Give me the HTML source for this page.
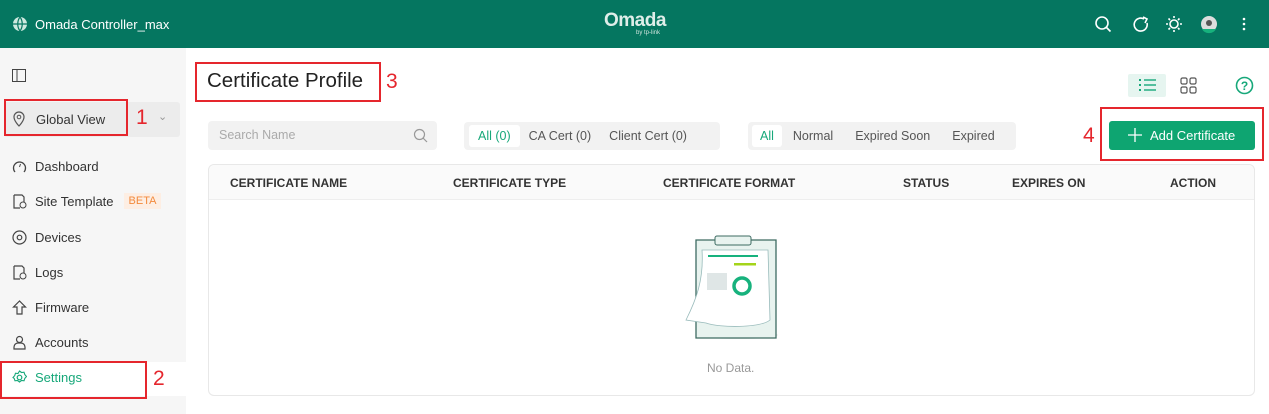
<!DOCTYPE html>
<html><head><style>
*{box-sizing:border-box;margin:0;padding:0}
body{width:1269px;height:414px;overflow:hidden;font-family:"Liberation Sans",sans-serif;background:#fff;position:relative;color:#333}
.abs{position:absolute}
.hdr{left:0;top:0;width:1269px;height:48px;background:#057660}
.side{left:0;top:48px;width:186px;height:366px;background:#f6f6f6}
.nav{position:absolute;left:12px;font-size:13px;color:#333;display:flex;align-items:center;gap:8px}
.red{border:2px solid #e5262d;position:absolute}
.rn{position:absolute;color:#e5262d;font-size:21px}
.seg{position:absolute;background:#f2f2f2;border-radius:4px;height:28px;top:122px;display:flex;align-items:center;padding:0 4px;font-size:12.5px;color:#555}
.seg span{padding:0 8px;height:22px;line-height:22px;border-radius:3px}
.seg .on{background:#fff;color:#17a87a}
.th{position:absolute;top:176px;font-size:12px;font-weight:bold;color:#333}
</style></head><body>
<div class="abs hdr"></div>
<svg class="abs" style="left:12px;top:16px" width="16" height="16" viewBox="0 0 16 16"><circle cx="8" cy="8" r="7" fill="#cde8df"/><path d="M1 8h14M8 1c-3 4-3 10 0 14M8 1c3 4 3 10 0 14" stroke="#057660" stroke-width="1.2" fill="none"/></svg>
<div class="abs" style="left:35px;top:17px;color:#fff;font-size:13px">Omada Controller_max</div>
<div class="abs" style="left:604px;top:10px;color:#dfeee9;font-size:19px;font-weight:bold;letter-spacing:-0.5px">Omada</div>
<div class="abs" style="left:636px;top:30px;color:#cfe5de;font-size:6px">by tp-link</div>
<svg class="abs" style="left:1094px;top:15px" width="160" height="20" viewBox="0 0 160 20"><g fill="none" stroke="#fff" stroke-width="1.6"><circle cx="8" cy="8" r="6"/><path d="M12.5 12.5l4 4"/><path d="M50 4a6.5 6.5 0 1 0 3 4"/><path d="M49 2l4 2-2 4"/><circle cx="80" cy="9" r="4"/><path d="M80 1v2M80 15v2M72 9h2M86 9h2M74.5 3.5l1.5 1.5M84 13l1.5 1.5M74.5 14.5L76 13M84 5l1.5-1.5"/></g><circle cx="115" cy="9" r="8" fill="#ddd"/><path d="M108 14a8 8 0 0 0 14 0z" fill="#17b27d"/><circle cx="115" cy="8" r="3" fill="#555"/><g fill="#fff"><circle cx="150" cy="4" r="1.3"/><circle cx="150" cy="9" r="1.3"/><circle cx="150" cy="14" r="1.3"/></g></svg>

<div class="abs side"></div>
<svg class="abs" style="left:12px;top:69px" width="14" height="13"><rect x="0.5" y="0.5" width="13" height="12" fill="none" stroke="#444"/><path d="M5 1v11" stroke="#444"/></svg>
<div class="abs" style="left:4px;top:102px;width:176px;height:35px;background:#ececec;border-radius:3px"></div>
<div class="red" style="left:4px;top:99px;width:124px;height:37px"></div>
<div class="rn" style="left:136px;top:106px">1</div>
<div class="abs" style="left:158px;top:110px;color:#999;font-size:11px">&#8964;</div>
<div class="nav" style="top:111px"><svg width="14" height="16"><path d="M7 15s5-5 5-9a5 5 0 0 0-10 0c0 4 5 9 5 9z" fill="none" stroke="#555" stroke-width="1.2"/><circle cx="7" cy="6" r="1.8" fill="none" stroke="#555"/></svg><span style="margin-left:2px">Global View</span></div>
<div class="nav" style="top:159px"><svg width="15" height="15"><path d="M3 13a6 6 0 1 1 9 0" fill="none" stroke="#444" stroke-width="1.3"/><path d="M7.5 8l1-3" stroke="#444"/></svg>Dashboard</div>
<div class="nav" style="top:193px"><svg width="15" height="15"><path d="M2 1h8l2 2v5M2 1v13h6" fill="none" stroke="#444" stroke-width="1.2"/><circle cx="11" cy="11" r="3" fill="none" stroke="#444"/></svg>Site Template<span style="background:#fdeee3;color:#f38a3c;font-size:11px;padding:2px 5px;margin-left:2px">BETA</span></div>
<div class="nav" style="top:230px"><svg width="15" height="15"><circle cx="7.5" cy="7.5" r="6.5" fill="none" stroke="#444" stroke-width="1.2"/><circle cx="7.5" cy="7.5" r="2.3" fill="none" stroke="#444" stroke-width="1.2"/></svg>Devices</div>
<div class="nav" style="top:265px"><svg width="15" height="15"><path d="M2 1h8l2 2v5M2 1v13h6" fill="none" stroke="#444" stroke-width="1.2"/><circle cx="11" cy="11" r="3" fill="none" stroke="#444"/></svg>Logs</div>
<div class="nav" style="top:300px"><svg width="15" height="15"><path d="M7.5 1L1.5 7h3.5v7h5V7h3.5z" fill="none" stroke="#444" stroke-width="1.2"/></svg>Firmware</div>
<div class="nav" style="top:335px"><svg width="15" height="15"><circle cx="7.5" cy="4.5" r="3" fill="none" stroke="#444" stroke-width="1.2"/><path d="M2 14v-2a4 4 0 0 1 4-4h3a4 4 0 0 1 4 4v2z" fill="none" stroke="#444" stroke-width="1.2"/></svg>Accounts</div>
<div class="abs" style="left:0;top:362px;width:186px;height:34px;background:#fff"></div>
<div class="red" style="left:0;top:361px;width:147px;height:38px"></div>
<div class="rn" style="left:153px;top:367px">2</div>
<div class="nav" style="top:370px;color:#17a87a"><svg width="15" height="15"><circle cx="7.5" cy="7.5" r="2.3" fill="none" stroke="#17a87a" stroke-width="1.2"/><path d="M7.5 1l2 1.5 2.5-.3.8 2.4 1.7 1.9-1.7 1.9-.8 2.4-2.5-.3-2 1.5-2-1.5-2.5.3-.8-2.4L1 7.5l1.7-1.9.8-2.4 2.5.3z" fill="none" stroke="#17a87a" stroke-width="1.1"/></svg>Settings</div>

<div class="red" style="left:195px;top:62px;width:186px;height:40px"></div>
<div class="abs" style="left:207px;top:69px;font-size:20.5px;color:#222">Certificate Profile</div>
<div class="rn" style="left:386px;top:70px">3</div>
<div class="abs" style="left:1128px;top:74px;width:38px;height:23px;background:#e6f5f0;border-radius:2px"></div>
<svg class="abs" style="left:1139px;top:78px" width="18" height="15"><g fill="#17a87a"><rect x="0" y="1" width="2" height="2"/><rect x="0" y="6" width="2" height="2"/><rect x="0" y="11" width="2" height="2"/><rect x="5" y="1.3" width="12" height="1.4"/><rect x="5" y="6.3" width="12" height="1.4"/><rect x="5" y="11.3" width="12" height="1.4"/></g></svg>
<svg class="abs" style="left:1180px;top:77px" width="17" height="17"><g fill="none" stroke="#555" stroke-width="1.2"><rect x="1" y="1" width="6" height="6" rx="1.5"/><rect x="10" y="1" width="6" height="6" rx="1.5"/><rect x="1" y="10" width="6" height="6" rx="1.5"/><rect x="10" y="10" width="6" height="6" rx="1.5"/></g></svg>
<svg class="abs" style="left:1235px;top:76px" width="19" height="19"><circle cx="9.5" cy="9.5" r="8" fill="none" stroke="#17a87a" stroke-width="1.6"/><text x="9.5" y="14" text-anchor="middle" font-size="12" font-weight="bold" fill="#17a87a" font-family="Liberation Sans">?</text></svg>

<div class="abs" style="left:208px;top:121px;width:229px;height:29px;background:#f2f2f2;border-radius:4px"></div>
<div class="abs" style="left:219px;top:128px;font-size:12.5px;color:#aaa">Search Name</div>
<svg class="abs" style="left:413px;top:128px" width="15" height="15"><circle cx="6.5" cy="6.5" r="5" fill="none" stroke="#999" stroke-width="1.2"/><path d="M10 10l4 4" stroke="#999" stroke-width="1.2"/></svg>
<div class="seg" style="left:464px;width:256px;padding:0 5px"><span class="on" style="padding:0 9px">All (0)</span><span style="padding:0 9px">CA Cert (0)</span><span style="padding:0 9px">Client Cert (0)</span></div>
<div class="seg" style="left:748px;width:268px"><span class="on">All</span><span style="padding:0 11px">Normal</span><span style="padding:0 11px">Expired Soon</span><span style="padding:0 11px">Expired</span></div>
<div class="rn" style="left:1083px;top:124px">4</div>
<div class="red" style="left:1100px;top:107px;width:164px;height:54px"></div>
<div class="abs" style="left:1109px;top:121px;width:146px;height:29px;background:#0ea571;border-radius:3px;color:#fff;font-size:13px;line-height:29px;padding-left:41px">Add Certificate</div>
<svg class="abs" style="left:1128px;top:128px" width="14" height="14"><path d="M7 0v14M0 7h14" stroke="#fff" stroke-width="1.3"/></svg>

<div class="abs" style="left:208px;top:164px;width:1047px;height:232px;border:1px solid #e8e8e8;border-radius:6px"></div>
<div class="abs" style="left:209px;top:165px;width:1045px;height:35px;background:#fafafa;border-bottom:1px solid #eee;border-radius:6px 6px 0 0"></div>
<div class="th" style="left:230px">CERTIFICATE NAME</div>
<div class="th" style="left:453px">CERTIFICATE TYPE</div>
<div class="th" style="left:663px">CERTIFICATE FORMAT</div>
<div class="th" style="left:903px">STATUS</div>
<div class="th" style="left:1012px">EXPIRES ON</div>
<div class="th" style="left:1170px">ACTION</div>
<svg class="abs" style="left:680px;top:232px" width="110" height="110" viewBox="0 0 110 110"><ellipse cx="58" cy="103" rx="40" ry="4" fill="#eee"/><path d="M16 8h80v98H16z" fill="#e8f3ef" stroke="#3d6b62" stroke-width="1.3"/><rect x="35" y="4" width="36" height="9" rx="2" fill="#e8f3ef" stroke="#3d6b62"/><path d="M22 18h66l2 70c-10 8-50 8-64 3l-20-3c10-20 18-40 16-70z" fill="#fff" stroke="#9bb" stroke-width="0.8"/><rect x="28" y="23" width="50" height="2" fill="#17b27d"/><rect x="54" y="31" width="22" height="2.5" fill="#a4d41a"/><rect x="27" y="41" width="20" height="17" fill="#dfe6e6"/><circle cx="62" cy="54" r="8" fill="none" stroke="#17b27d" stroke-width="3.5"/></svg>
<div class="abs" style="left:707px;top:361px;font-size:12px;color:#999">No Data.</div>
</body></html>
